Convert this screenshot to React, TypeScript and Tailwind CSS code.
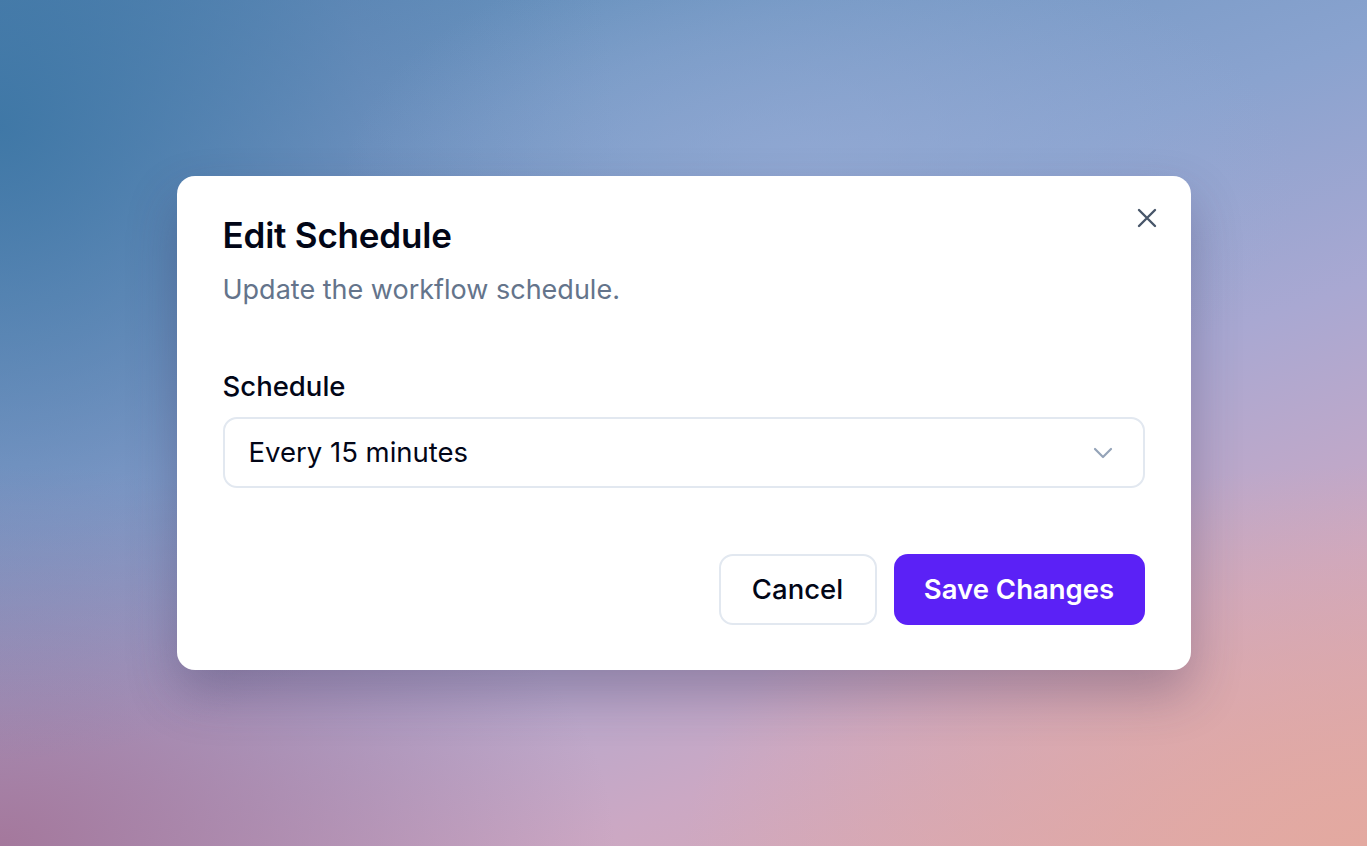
import React, { useState } from 'react';

const schedules = ['Every 5 minutes', 'Every 15 minutes', 'Every 30 minutes', 'Hourly', 'Daily'];

export default function App() {
  const [schedule] = useState(schedules[1]);

  return (
    <div
      className="h-screen w-full flex items-center justify-center overflow-hidden font-['Inter',sans-serif] bg-[radial-gradient(ellipse_35%_30%_at_60%_22%,rgba(152,172,214,0.7)_0%,rgba(152,172,214,0)_100%),radial-gradient(ellipse_45%_75%_at_0%_15%,rgba(58,116,163,0.85)_0%,rgba(90,125,175,0.35)_60%,rgba(58,116,163,0)_100%),radial-gradient(ellipse_45%_45%_at_0%_100%,#a4789c_0%,rgba(164,120,156,0)_100%),radial-gradient(ellipse_50%_45%_at_100%_100%,#e3a9a0_0%,rgba(227,169,160,0)_100%),linear-gradient(160deg,#4f84b0_0%,#7398c4_22%,#8aa3cf_40%,#a9a8d2_58%,#cba8c4_78%,#dea9ae_100%)]"
    >
      {/* Dialog */}
      <div className="relative w-[1014px] bg-white rounded-[18px] shadow-[0_24px_50px_rgba(50,40,80,0.3)] pt-[39px] px-[46px] pb-[45px]">
        <button className="absolute right-[34px] top-[32px] text-[#475569]">
          <svg width="20" height="20" viewBox="0 0 20 20" fill="none" stroke="currentColor" strokeWidth="2.4" strokeLinecap="round">
            <path d="M2 2 L18 18 M18 2 L2 18" />
          </svg>
        </button>

        <h2 className="text-[35px] leading-[40px] font-semibold text-[#020617] tracking-[-0.2px]">Edit Schedule</h2>
        <p className="mt-[18px] text-[27px] leading-[34px] text-[#64748b]">Update the workflow schedule.</p>

        <div className="mt-[62px]">
          <label className="block text-[27.5px] leading-[34px] font-medium text-[#020617]">Schedule</label>
          <div className="mt-[14px] h-[71px] flex items-center justify-between rounded-[14px] border-2 border-[#e2e8f0] pl-[24px] pr-[30px]">
            <span className="text-[27.5px] text-[#020617]">{schedule}</span>
            <svg width="20" height="12" viewBox="0 0 20 12" fill="none" stroke="#94a3b8" strokeWidth="2.2" strokeLinecap="round" strokeLinejoin="round">
              <path d="M2 2 L10 10 L18 2" />
            </svg>
          </div>
        </div>

        <div className="mt-[66px] flex justify-end gap-[17px]">
          <button className="h-[71px] w-[158px] rounded-[14px] border-2 border-[#e2e8f0] bg-white text-[27.5px] font-medium text-[#020617]">
            Cancel
          </button>
          <button className="h-[71px] w-[251px] rounded-[14px] bg-[#5b21f6] text-[27.5px] font-semibold text-white">
            Save Changes
          </button>
        </div>
      </div>
    </div>
  );
}
